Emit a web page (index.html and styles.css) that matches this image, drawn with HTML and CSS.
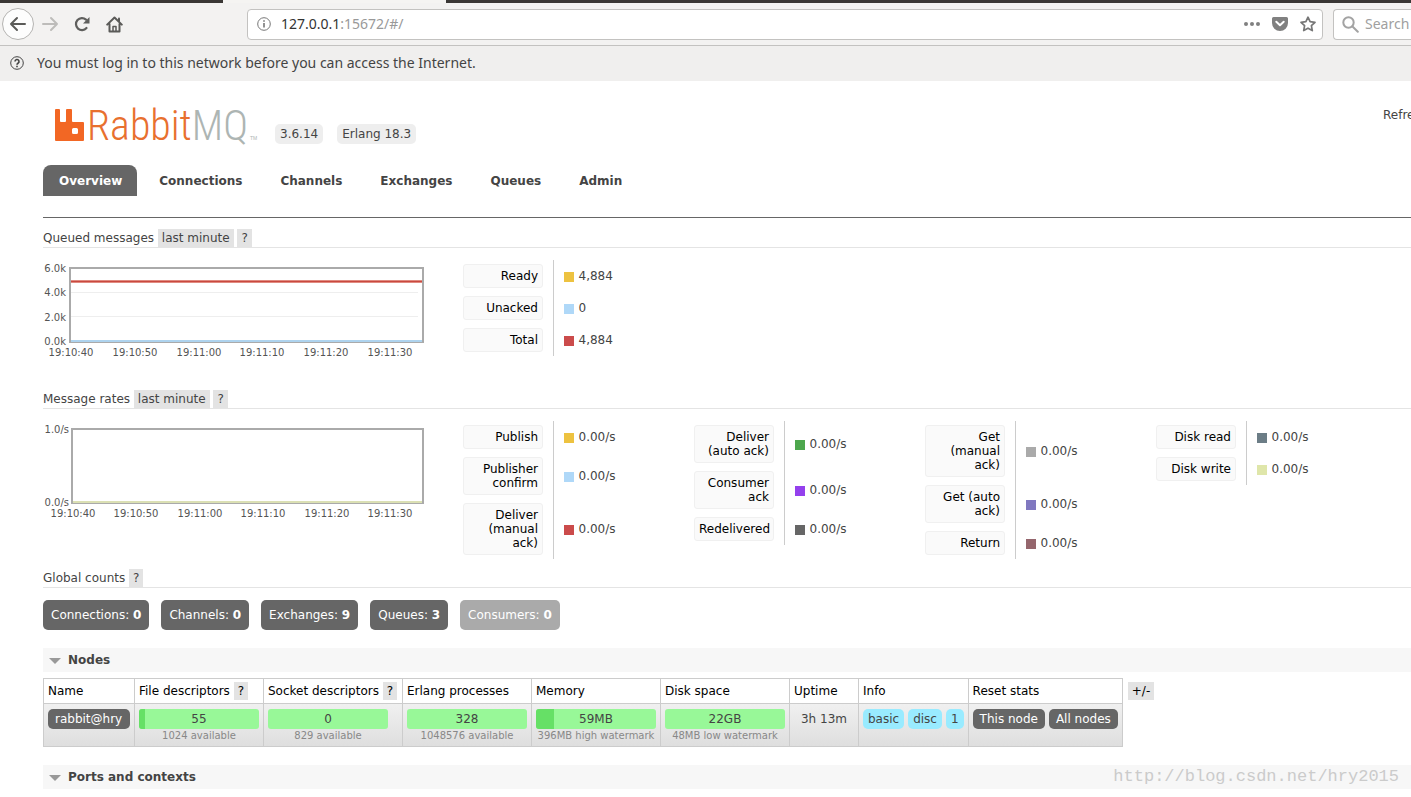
FILE: index.html
```html
<!DOCTYPE html>
<html lang="en">
<head>
    <meta charset="UTF-8">
    <meta name="viewport" content="width=device-width, initial-scale=1.0">
    <title>RabbitMQ Management</title>
    <link rel="stylesheet" href="styles.css">
</head>
<body>
    <!-- Browser chrome -->
    <div class="tabstrip"><div class="tabstrip-active"></div></div>
    <div class="toolbar">
        <button class="nav-btn back" aria-label="Back">
            <svg width="18" height="16" viewBox="0 0 18 16" fill="none" stroke="#5a5a58" stroke-width="2" stroke-linecap="round" stroke-linejoin="round"><path d="M16 8H2M8 2L2 8l6 6"/></svg>
        </button>
        <button class="nav-btn" aria-label="Forward">
            <svg width="18" height="16" viewBox="0 0 18 16" fill="none" stroke="#bdbcba" stroke-width="2" stroke-linecap="round" stroke-linejoin="round"><path d="M2 8h14M10 2l6 6-6 6"/></svg>
        </button>
        <button class="nav-btn" aria-label="Reload">
            <svg width="16" height="16" viewBox="0 0 16 16"><path d="M12.5 12A6 6 0 1 1 12 3.600" fill="none" stroke="#5f5f5d" stroke-width="2.200" stroke-linecap="round"/><path d="M15.500 1v6.500H9z" fill="#5f5f5d"/></svg>
        </button>
        <button class="nav-btn" aria-label="Home">
            <svg width="17" height="17" viewBox="0 0 17 17" fill="none" stroke="#5a5a58" stroke-width="2" stroke-linecap="round" stroke-linejoin="round"><path d="M1.200 8.600L8.500 1.500l7.300 7.100M3.500 8v7.500h10V8"/><path d="M13 2.500v2.500"/><path d="M7 15v-4.500h3V15" stroke-width="1.500"/></svg>
        </button>
        <div class="urlbar">
            <svg width="14" height="14" viewBox="0 0 14 14" fill="none" stroke="#777"><circle cx="7" cy="7" r="6.300"/><path d="M7 6v4.500M7 3.200v1.500" stroke-width="1.600"/></svg>
            <div class="url"><span>127.0.0.1</span>:15672/#/</div>
            <svg width="16" height="16" viewBox="0 0 16 16" fill="#808080"><circle cx="2" cy="8" r="2"/><circle cx="8" cy="8" r="2"/><circle cx="14" cy="8" r="2"/></svg>
            <svg width="16" height="16" viewBox="0 0 16 16"><path d="M1.500 1h13A1.500 1.500 0 0 1 16 2.500V7a8 8 0 0 1-16 0V2.500A1.500 1.500 0 0 1 1.500 1z" fill="#808080"/><path d="M4.300 5.800L8 9.300l3.700-3.500" fill="none" stroke="#fff" stroke-width="2" stroke-linecap="round" stroke-linejoin="round"/></svg>
            <svg width="16" height="16" viewBox="0 0 16 16" fill="none" stroke="#777" stroke-width="1.700" stroke-linejoin="round"><path d="M8 1.200l2.100 4.500 4.900.6-3.600 3.400.9 4.900L8 12.200l-4.300 2.400.9-4.900L1 6.300l4.900-.6z"/></svg>
        </div>
        <div class="search">
            <svg width="17" height="17" viewBox="0 0 17 17" fill="none" stroke="#a3a3a3" stroke-width="2" stroke-linecap="round"><circle cx="6.500" cy="6.500" r="5.200"/><path d="M10.500 10.500l5.300 5.300"/></svg>
            <input type="text" placeholder="Search" aria-label="Search">
        </div>
    </div>
    <div class="notice">
        <svg width="14" height="14" viewBox="0 0 14 14" fill="none" stroke="#444"><circle cx="7" cy="7" r="6.300"/><path d="M5 5.500a2 2 0 1 1 3 1.700c-.8.500-1 .8-1 1.500M7 9.800v1.400" stroke-width="1.600"/></svg>
        <span>You must log in to this network before you can access the Internet.</span>
    </div>

    <main>
        <header>
            <svg class="logo" width="216" height="44" viewBox="0 0 216 44" role="img" aria-label="RabbitMQ">
                <path fill="#f26724" fill-rule="evenodd" d="M13 9h3q1 0 1 1v11q0 1 1 1h4q1 0 1-1V10q0-1 1-1h4q1 0 1 1v11q0 1 1 1h10q1 0 1 1v17q0 1-1 1H13q-1 0-1-1V10q0-1 1-1zM30.500 28a1.500 1.500 0 0 0-1.500 1.500v3a1.500 1.500 0 0 0 1.500 1.500h3a1.500 1.500 0 0 0 1.500-1.500v-3a1.500 1.500 0 0 0-1.500-1.500z"/>
                <text class="logo-text" x="44" y="40"><tspan fill="#e8702f">Rabbit</tspan><tspan fill="#adb5b3">MQ</tspan></text>
                <text class="logo-tm" x="207" y="40">TM</text>
            </svg>
            <span class="version">3.6.14</span>
            <span class="version">Erlang 18.3</span>
            <span class="refresh">Refresh every 5 seconds</span>
        </header>

        <nav>
            <a href="#/" class="selected">Overview</a>
            <a href="#/connections">Connections</a>
            <a href="#/channels">Channels</a>
            <a href="#/exchanges">Exchanges</a>
            <a href="#/queues">Queues</a>
            <a href="#/users">Admin</a>
        </nav>

        <h3>Queued messages <button class="tag">last minute</button> <button class="tag">?</button></h3>
        <div class="stats">
            <svg class="chart" width="400" height="120" viewBox="0 0 400 120">
                <path d="M28 32.500H375M28 56.500H375" stroke="#eee"/>
                <path d="M28 21.500H380" stroke="#e08a80" stroke-width="3"/>
                <path d="M28 21.500H380" stroke="#c9493f"/>
                <rect x="27" y="8" width="353" height="74" fill="none" stroke="#aaa" stroke-width="2"/>
                <path d="M28 81H379" stroke="#aed3ee" stroke-width="2"/>
                <g text-anchor="end">
                    <text x="23" y="12">6.0k</text>
                    <text x="23" y="36">4.0k</text>
                    <text x="23" y="61">2.0k</text>
                    <text x="23" y="85">0.0k</text>
                </g>
                <g text-anchor="middle">
                    <text x="28" y="96">19:10:40</text>
                    <text x="92" y="96">19:10:50</text>
                    <text x="156" y="96">19:11:00</text>
                    <text x="219" y="96">19:11:10</text>
                    <text x="283" y="96">19:11:20</text>
                    <text x="347" y="96">19:11:30</text>
                </g>
            </svg>
            <table class="legend">
                <tr><th><div>Ready</div></th><td><i class="yellow"></i>4,884</td></tr>
                <tr><th><div>Unacked</div></th><td><i class="blue"></i>0</td></tr>
                <tr><th><div>Total</div></th><td><i class="red"></i>4,884</td></tr>
            </table>
        </div>

        <h3>Message rates <button class="tag">last minute</button> <button class="tag">?</button></h3>
        <div class="stats">
            <svg class="chart" width="400" height="120" viewBox="0 0 400 120">
                <rect x="29" y="8" width="351" height="74" fill="none" stroke="#aaa" stroke-width="2"/>
                <path d="M30 81H379" stroke="#dbe0b4" stroke-width="2"/>
                <g text-anchor="end">
                    <text x="26" y="12">1.0/s</text>
                    <text x="26" y="85">0.0/s</text>
                </g>
                <g text-anchor="middle">
                    <text x="30" y="96">19:10:40</text>
                    <text x="93" y="96">19:10:50</text>
                    <text x="157" y="96">19:11:00</text>
                    <text x="220" y="96">19:11:10</text>
                    <text x="284" y="96">19:11:20</text>
                    <text x="347" y="96">19:11:30</text>
                </g>
            </svg>
            <table class="legend">
                <tr><th><div>Publish</div></th><td><i class="yellow"></i>0.00/s</td></tr>
                <tr><th><div>Publisher confirm</div></th><td><i class="blue"></i>0.00/s</td></tr>
                <tr><th><div>Deliver (manual ack)</div></th><td><i class="red"></i>0.00/s</td></tr>
            </table>
            <table class="legend">
                <tr><th><div>Deliver (auto ack)</div></th><td><i class="green"></i>0.00/s</td></tr>
                <tr><th><div>Consumer ack</div></th><td><i class="purple"></i>0.00/s</td></tr>
                <tr><th><div>Redelivered</div></th><td><i class="dark"></i>0.00/s</td></tr>
            </table>
            <table class="legend">
                <tr><th><div>Get (manual ack)</div></th><td><i class="grey"></i>0.00/s</td></tr>
                <tr><th><div>Get (auto ack)</div></th><td><i class="violet"></i>0.00/s</td></tr>
                <tr><th><div>Return</div></th><td><i class="brown"></i>0.00/s</td></tr>
            </table>
            <table class="legend">
                <tr><th><div>Disk read</div></th><td><i class="slate"></i>0.00/s</td></tr>
                <tr><th><div>Disk write</div></th><td><i class="lime"></i>0.00/s</td></tr>
            </table>
        </div>

        <h3>Global counts <button class="tag">?</button></h3>
        <div class="counts">
            <a href="#/connections">Connections: <b>0</b></a>
            <a href="#/channels">Channels: <b>0</b></a>
            <a href="#/exchanges">Exchanges: <b>9</b></a>
            <a href="#/queues">Queues: <b>3</b></a>
            <a class="disabled">Consumers: <b>0</b></a>
        </div>

        <h2>Nodes</h2>
        <div class="nodes">
            <table class="list">
                <thead>
                    <tr>
                        <th>Name</th>
                        <th>File descriptors <button class="tag">?</button></th>
                        <th>Socket descriptors <button class="tag">?</button></th>
                        <th>Erlang processes</th>
                        <th>Memory</th>
                        <th>Disk space</th>
                        <th>Uptime</th>
                        <th>Info</th>
                        <th>Reset stats</th>
                    </tr>
                </thead>
                <tbody>
                    <tr>
                        <td><a class="dark-btn node-name" href="#/nodes/rabbit">rabbit@hry</a></td>
                        <td><div class="bar"><div class="fill" style="width: 5%"></div><span>55</span></div><small>1024 available</small></td>
                        <td class="sockets"><div class="bar"><span>0</span></div><small>829 available</small></td>
                        <td><div class="bar"><span>328</span></div><small>1048576 available</small></td>
                        <td><div class="bar"><div class="fill" style="width: 15%"></div><span>59MB</span></div><small>396MB high watermark</small></td>
                        <td><div class="bar"><span>22GB</span></div><small>48MB low watermark</small></td>
                        <td class="center">3h 13m</td>
                        <td><div class="group"><span class="info">basic</span><span class="info">disc</span><span class="info">1</span></div></td>
                        <td><div class="group"><button class="dark-btn">This node</button><button class="dark-btn">All nodes</button></div></td>
                    </tr>
                </tbody>
            </table>
            <button class="tag">+/-</button>
        </div>

        <h2>Ports and contexts</h2>
    </main>
    <div class="watermark">http://blog.csdn.net/hry2015</div>
</body>
</html>
```
FILE: styles.css
```css
* {
    box-sizing: border-box;
}
body {
    margin: 0;
    background: #fff;
    color: #444;
    font: 12px/14px "DejaVu Sans", Verdana, sans-serif;
    position: relative;
    overflow: hidden;
}
button {
    font: inherit;
    color: inherit;
    border: none;
    margin: 0;
    cursor: pointer;
}
a {
    color: inherit;
    text-decoration: none;
}

/* browser */
.tabstrip {
    height: 3px;
    background: #3a3735;
}
.tabstrip-active {
    width: 223px;
    height: 3px;
    margin-left: 223px;
    background: #f5f4f2;
}
.toolbar {
    display: flex;
    align-items: center;
    height: 43px;
    padding-left: 2px;
    background: #f3f2f1;
    border-bottom: 1px solid #c3c2c0;
    font: 14px/20px "Noto Sans", sans-serif;
}
.nav-btn {
    display: flex;
    align-items: center;
    justify-content: center;
    width: 32px;
    height: 32px;
    padding: 0;
    background: none;
}
.back {
    background: #fdfdfd;
    border: 1px solid #b5b4b2;
    border-radius: 50%;
}
.urlbar, .search {
    display: flex;
    align-items: center;
    height: 31px;
    background: #fff;
    border: 1px solid #c3c2c0;
}
.urlbar {
    flex: 1;
    gap: 12px;
    margin-left: 117px;
    padding: 0 6px 0 9px;
    border-radius: 4px;
}
.url {
    flex: 1;
    margin-left: -2px;
    color: #999;
}
.url span {
    color: #333;
}
.search {
    flex: none;
    width: 78px;
    margin-left: 10px;
    padding-left: 8px;
    gap: 6px;
    border-right: none;
    border-radius: 4px 0 0 4px;
}
.search svg {
    flex: none;
}
.search input {
    width: 50px;
    min-width: 0;
    padding: 0;
    border: none;
    font: 14px/20px "Noto Sans", sans-serif;
}
.search input::placeholder {
    color: #a0a0a0;
}
.notice {
    display: flex;
    align-items: center;
    gap: 13px;
    height: 35px;
    padding: 0 0 2px 10px;
    background: #f0efee;
    font: 14px/20px "Noto Sans", sans-serif;
    white-space: nowrap;
}

/* page */
main {
    padding-left: 43px;
}
header {
    display: flex;
    align-items: flex-end;
    height: 63px;
}
.logo {
    flex: none;
    margin-right: 16px;
    overflow: visible;
}
.logo-text {
    font: 300 42px "Roboto Condensed", "Liberation Sans Narrow", Roboto, sans-serif;
}
.logo-tm {
    font: 5px "Liberation Sans", sans-serif;
    fill: #adb5b3;
}
.version {
    flex: none;
    margin-right: 12px;
    padding: 3px 5px;
    background: #eee;
    border-radius: 5px;
}
.version + .version {
    margin-left: 2px;
}
.refresh {
    width: 28px;
    margin: 0 0 22px auto;
    white-space: nowrap;
    overflow: hidden;
}
nav {
    display: flex;
    gap: 6px;
    margin-top: 21px;
    padding-bottom: 21px;
    border-bottom: 1px solid #666;
    font-weight: bold;
}
nav a {
    padding: 9px 16px 8px;
    border-radius: 8px 8px 0 0;
}
nav .selected {
    padding-right: 15px;
    background: #666;
    color: #fff;
}
h3 {
    height: 19px;
    margin: 11px 0 0;
    border-bottom: 1px solid #e4e4e4;
    font-size: 12px;
    line-height: 18px;
    font-weight: normal;
}
.tag {
    padding: 2px 4px;
    background: #e3e3e3;
    line-height: 14px;
}
.stats {
    display: flex;
    align-items: flex-start;
    padding-top: 12px;
}
.stats + h3 {
    margin-top: 10px;
}
.chart {
    flex: none;
    margin-right: 20px;
}
.chart text {
    font-size: 10px;
    fill: #545454;
}
.legend {
    flex: none;
    width: 231px;
    border-collapse: collapse;
}
.legend th {
    width: 90px;
    padding: 4px 9px 4px 0;
    border-right: 1px solid #ccc;
    color: #000;
    font-weight: normal;
    text-align: right;
}
.legend th div {
    width: 80px;
    padding: 4px;
    background: #fafafa;
    border: 1px solid #f0f0f0;
    border-radius: 3px;
}
.legend td {
    padding: 0 10px;
}
.legend i {
    display: inline-block;
    width: 10px;
    height: 10px;
    margin-right: 5px;
    vertical-align: -2px;
}
.yellow { background: #edc240; }
.blue { background: #afd8f8; }
.red { background: #cb4b4b; }
.green { background: #4da74d; }
.purple { background: #9440ed; }
.dark { background: #666; }
.grey { background: #aaa; }
.violet { background: #8078c0; }
.brown { background: #95666d; }
.slate { background: #6c7d86; }
.lime { background: #dfe6aa; }

.counts {
    display: flex;
    gap: 12px;
    margin: 12px 0 18px;
}
.counts a {
    padding: 8px;
    background: #666;
    border-radius: 5px;
    color: #fff;
}
.counts .disabled {
    background: #aaa;
}
h2 {
    display: flex;
    align-items: center;
    gap: 7px;
    height: 24px;
    margin: 0;
    padding-left: 6px;
    background: #f7f7f7;
    font-size: 12px;
}
h2::before {
    content: "";
    margin-top: 2px;
    border: 6px solid transparent;
    border-top-color: #999;
    border-bottom: none;
}
.nodes {
    display: flex;
    align-items: flex-start;
    gap: 5px;
    margin: 6px 0 18px;
}
.nodes > .tag {
    margin-top: 4px;
    color: #000;
}
.list {
    border-collapse: collapse;
    white-space: nowrap;
}
.list th, .list td {
    border: 1px solid #ccc;
    text-align: left;
}
.list th {
    height: 25px;
    padding: 3px 4px;
    color: #000;
    font-weight: normal;
}
.list td {
    height: 42px;
    padding: 5px 4px 3px;
    vertical-align: top;
}
.list tbody tr {
    background: linear-gradient(#f0f0f0, #dedede);
}
.list .sockets {
    min-width: 139px;
}
.list .center {
    min-width: 69px;
    padding: 8px 4px;
    text-align: center;
}
.list small {
    display: block;
    width: 120px;
    color: #888;
    font-size: 10px;
    line-height: 14px;
    text-align: center;
}
.bar {
    position: relative;
    width: 120px;
    height: 20px;
    background: #98f898;
    border-radius: 3px;
    overflow: hidden;
    line-height: 20px;
    text-align: center;
}
.bar span {
    position: relative;
}
.fill {
    position: absolute;
    top: 0;
    left: 0;
    height: 100%;
    background: #66e066;
}
.group {
    display: flex;
    gap: 4px;
}
.dark-btn {
    display: block;
    padding: 3px 7px;
    background: #666;
    border-radius: 5px;
    color: #fff;
}
.node-name {
    min-width: 82px;
}
.info {
    padding: 3px 5px;
    background: #99ebff;
    border-radius: 5px;
}
.watermark {
    position: absolute;
    right: 12px;
    bottom: 0;
    color: #cbcbcb;
    font: 17px/24px "Liberation Mono", monospace;
}
```
